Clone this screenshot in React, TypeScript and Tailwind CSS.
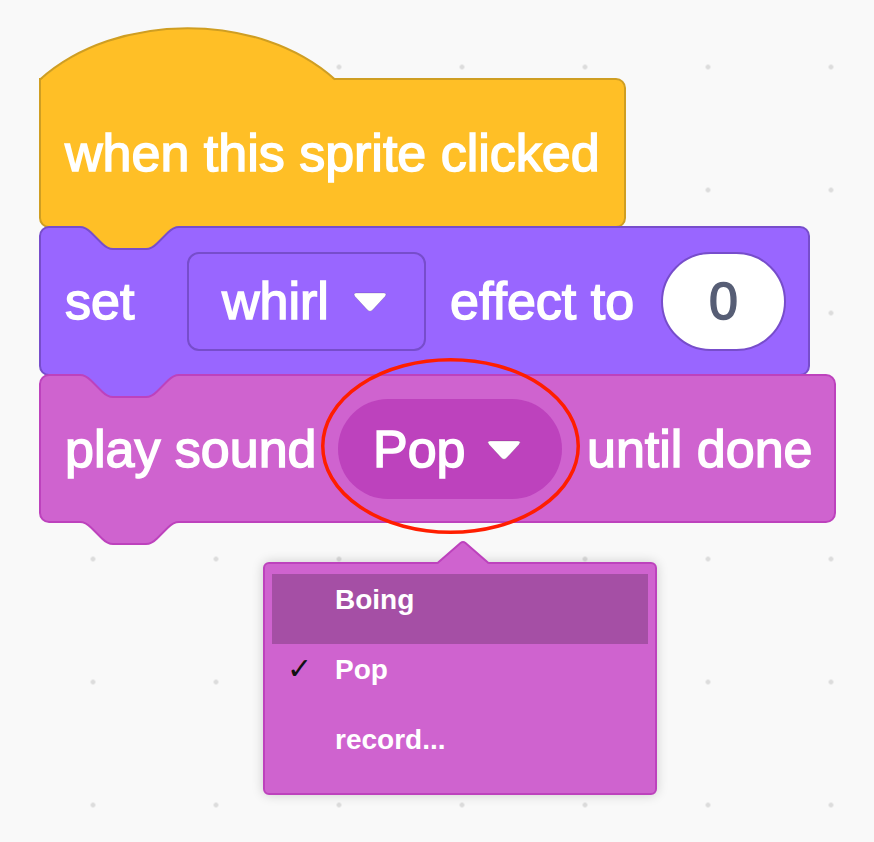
const label =
  "font-['Liberation_Sans',Arial,sans-serif] text-[52px] text-white [-webkit-text-stroke:1.5px_#fff] whitespace-nowrap";

const NOTCH =
  "M0 3 H3 c5.5 0 8.25 2.75 11 5.5 l11 11 c2.75 2.75 5.5 5.5 11 5.5 h33 c5.5 0 8.25 -2.75 11 -5.5 l11 -11 c2.75 -2.75 5.5 -5.5 11 -5.5 H105";

// tab hanging from the bottom of a block into the next one
const Notch = (props: { fill: string; stroke: string; top: string }) => {
  return (
    <svg
      width={106}
      height={28}
      viewBox="0 0 106 28"
      className={`absolute left-[36px] z-10 ${props.top}`}
    >
      <path d={NOTCH + " V0 H0 Z"} fill={props.fill} />
      <path d={NOTCH} fill="none" stroke={props.stroke} strokeWidth={2} />
    </svg>
  );
};

const Caret = () => {
  return (
    <svg width={36} height={24} viewBox="0 0 36 24">
      <path
        d="M4.5 3 H31.5 Q35.5 3 33 6.5 L20.5 20 Q18 22.5 15.5 20 L3 6.5 Q0.5 3 4.5 3 Z"
        fill="#fff"
        stroke="rgba(0,0,0,0.15)"
        strokeWidth={1}
      />
    </svg>
  );
};

const HatCap = () => {
  return (
    <svg
      width={300}
      height={57}
      viewBox="0 0 300 57"
      className="relative z-10 -mb-[4px] block"
    >
      <path
        d="M2 54.5 C77 -14 220 -14 295 54.5 V57 H2 Z"
        fill="#FFBF26"
      />
      <path
        d="M1 54.5 C77 -14 220 -14 296 54.5"
        fill="none"
        stroke="#CF9E22"
        strokeWidth={2}
      />
    </svg>
  );
};

const MenuItem = (props: { name: string; checked?: boolean; active?: boolean }) => {
  return (
    <div
      className={`flex h-[70px] items-start pl-[15px] pt-[10px] ${
        props.active ? "bg-[#A54FA5]" : ""
      }`}
    >
      <span className="w-[48px] -mt-[3px] font-['DejaVu_Sans',sans-serif] text-[30px] leading-[36px] text-[#111]">
        {props.checked ? "✓" : ""}
      </span>
      <span className="font-['Liberation_Sans',Arial,sans-serif] text-[28px] font-bold leading-[32px] text-white">
        {props.name}
      </span>
    </div>
  );
};

export default function App() {
  return (
    <div className="relative min-h-screen w-full overflow-hidden bg-[#f9f9f9] [background-image:radial-gradient(circle,#dcdcdc_2px,transparent_2.8px)] [background-size:123px_123px] [background-position:31.5px_5.5px]">
      <div className="flex flex-col items-start pl-[39px] pt-[25px]">
        <HatCap />

        {/* when this sprite clicked */}
        <div className="relative flex h-[150px] w-[587px] items-center rounded-[10px] rounded-tl-none border-2 border-[#CF9E22] bg-[#FFBF26] pl-[24px]">
          <span className={label}>when this sprite clicked</span>
          <Notch fill="#FFBF26" stroke="#774DCB" top="top-[144px]" />
        </div>

        {/* set whirl effect to 0 */}
        <div className="relative -mt-[2px] flex h-[150px] w-[771px] items-center rounded-[10px] border-2 border-[#774DCB] bg-[#9966FF] pl-[24px]">
          <span className={`${label} w-[122px]`}>set</span>
          <div className="flex h-[99px] w-[239px] items-center rounded-[12px] border-2 border-[#774DCB] pl-[33px]">
            <span className={label}>whirl</span>
            <span className="ml-[23px] mt-[2px]">
              <Caret />
            </span>
          </div>
          <span className={`${label} ml-[24px] w-[211px]`}>effect to</span>
          <div className="flex h-[99px] w-[125px] items-center justify-center rounded-full border-2 border-[#774DCB] bg-white">
            <span className="font-['Liberation_Sans',Arial,sans-serif] text-[52px] text-[#575E75] [-webkit-text-stroke:1.5px_#575E75]">
              0
            </span>
          </div>
          <Notch fill="#9966FF" stroke="#BD42BD" top="top-[144px]" />
        </div>

        {/* play sound Pop until done */}
        <div className="relative -mt-[2px] flex h-[149px] w-[797px] items-center rounded-[10px] border-2 border-[#BD42BD] bg-[#CF63CF] pl-[24px]">
          <span className={`${label} w-[273px]`}>play sound</span>
          <div className="flex h-[100px] w-[224px] items-center rounded-full bg-[#BD42BD] pl-[35px]">
            <span className={label}>Pop</span>
            <span className="ml-[20px] mt-[2px]">
              <Caret />
            </span>
          </div>
          <span className={`${label} ml-[25px]`}>until done</span>
          <Notch fill="#CF63CF" stroke="#BD42BD" top="top-[143px]" />
        </div>

        {/* dropdown menu */}
        <div className="ml-[224px] mt-[17px] flex flex-col items-start">
          <svg
            width={54}
            height={24}
            viewBox="0 0 54 24"
            className="relative z-10 -mb-[2px] ml-[173px] block"
          >
            <path d="M1 23.5 L24.5 3 Q27 1 29.5 3 L53 23.5 V24 H1 Z" fill="#CF63CF" />
            <path
              d="M1 23.5 L24.5 3 Q27 1 29.5 3 L53 23.5"
              fill="none"
              stroke="#BD42BD"
              strokeWidth={2}
            />
          </svg>
          <div className="h-[233px] w-[394px] rounded-[6px] border-2 border-[#BD42BD] bg-[#CF63CF] px-[7px] pt-[10px] shadow-[0_0_12px_rgba(0,0,0,0.18)]">
            <MenuItem name="Boing" active />
            <MenuItem name="Pop" checked />
            <MenuItem name="record..." />
          </div>
        </div>
      </div>

      <svg
        width={264}
        height={180}
        viewBox="0 0 264 180"
        className="pointer-events-none absolute left-[319px] top-[356px] z-20"
      >
        <ellipse
          cx={131.5}
          cy={90}
          rx={127.75}
          ry={86.25}
          fill="none"
          stroke="#FF1E00"
          strokeWidth={3.5}
        />
      </svg>
    </div>
  );
}
